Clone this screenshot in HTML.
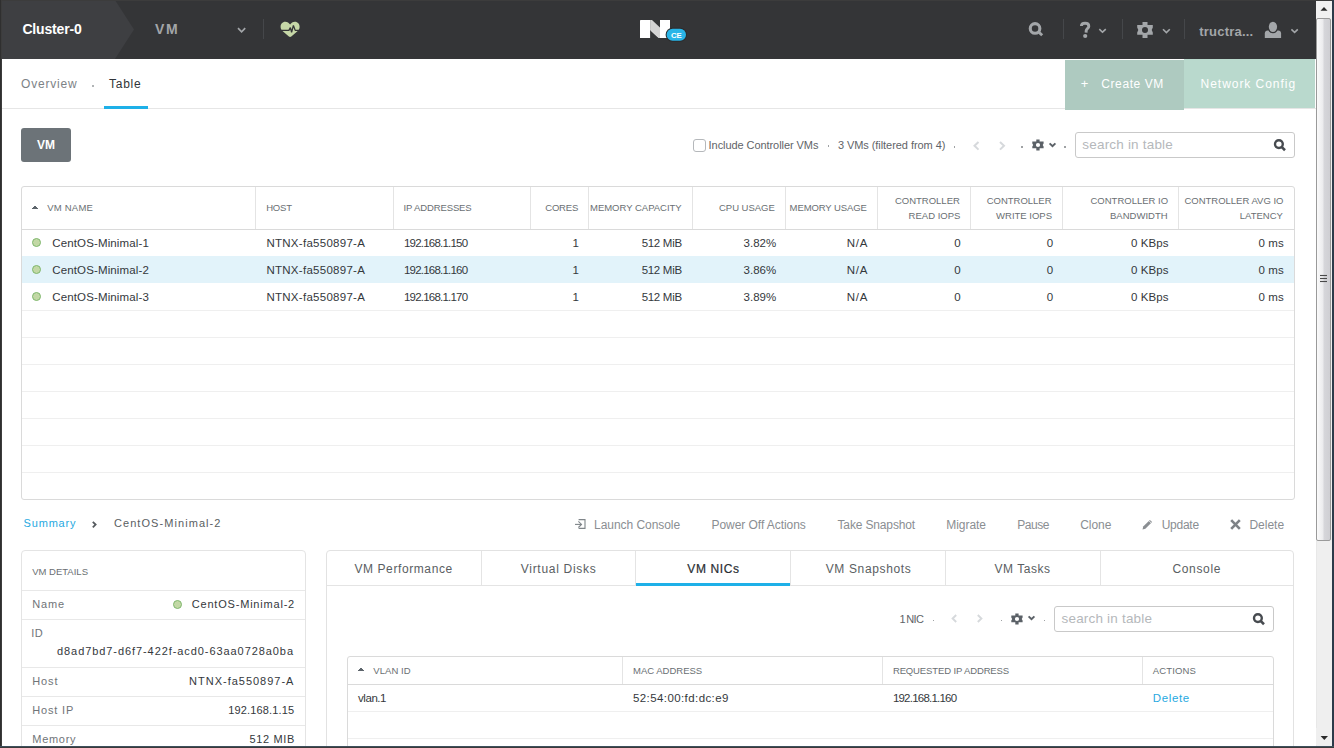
<!DOCTYPE html>
<html><head><meta charset="utf-8">
<style>
*{box-sizing:border-box;margin:0;padding:0}
html,body{width:1334px;height:748px;overflow:hidden;background:#fff;font-family:"Liberation Sans",sans-serif}
.a{position:absolute;white-space:nowrap}
.b{position:absolute}
#frame{position:absolute;left:0;top:0;width:1334px;height:748px;overflow:hidden;background:#fff}
.hl{position:absolute;height:1px;background:#efefef}
.vl{position:absolute;width:1px;background:#e4e4e4}
.dot{position:absolute;width:9px;height:9px;border-radius:50%;background:#c2d8a5;border:1px solid #7fb76d}
</style></head>
<body>
<div id="frame">
<!-- ===== HEADER ===== -->
<div class="b" style="left:0;top:0;width:1334px;height:59px;background:#343537"></div>
<svg class="b" style="left:0;top:0" width="140" height="59"><polygon points="0,0 115,0 134,29.5 115,59 0,59" fill="#3e3f42"/></svg>
<svg class="b" style="left:237px;top:27px" width="10" height="7"><polyline points="1,1.2 4.6,4.8 8.2,1.2" fill="none" stroke="#a3a6a9" stroke-width="1.7"/></svg>
<div class="b" style="left:263px;top:19px;width:1px;height:20px;background:#45474a"></div>
<!-- heart -->
<svg class="b" style="left:278px;top:19px" width="24" height="21" viewBox="278 19 24 21">
  <path d="M290.1 24.6 C291.2 22.8 292.8 21.7 294.9 21.7 C297.8 21.7 299.6 24 299.6 26.8 C299.6 28.6 299 29.7 298 30.8 L291.3 36.6 C290.6 37.2 289.6 37.2 288.9 36.6 L282.2 30.8 C281.2 29.7 280.6 28.6 280.6 26.8 C280.6 24 282.4 21.7 285.3 21.7 C287.4 21.7 289 22.8 290.1 24.6 Z" fill="#c6d7a7"/>
  <polyline points="280,30.4 288.9,30.4 290.4,27.6 291.6,32.4 293.4,25.4 295.2,30.4 300,30.4" fill="none" stroke="#343537" stroke-width="1.3" stroke-linejoin="bevel"/>
</svg>
<!-- logo -->
<svg class="b" style="left:638px;top:18px" width="52" height="26" viewBox="638 18 52 26">
  <polygon points="640.6,20 650.1,20 650.1,38 640,38 640,20.6" fill="#ffffff"/>
  <polygon points="660,20 670,20 670,38 660,38" fill="#ffffff"/>
  <polygon points="650.1,20 652,20 660,27.4 660,38 658.6,38 650.1,29.9" fill="#d3d3d3"/>
  <line x1="650.6" y1="30.3" x2="658.6" y2="37.6" stroke="#eaeaea" stroke-width="0.6"/>
  <rect x="665.6" y="27.8" width="21.4" height="14" rx="7" fill="#2b2b2d"/>
  <rect x="666.6" y="28.8" width="19.4" height="12" rx="6" fill="#29b5e8"/>
  <text x="676.4" y="37.9" font-family="Liberation Sans" font-weight="bold" font-size="7.8" fill="#fff" text-anchor="middle">CE</text>
</svg>
<!-- right icons -->
<svg class="b" style="left:1026px;top:19px" width="20" height="20" viewBox="1026 19 20 20">
  <circle cx="1035.05" cy="28.4" r="4.8" fill="none" stroke="#a3a6a9" stroke-width="3.1"/>
  <line x1="1038.6" y1="32" x2="1042.2" y2="35.3" stroke="#a3a6a9" stroke-width="2.9" stroke-linecap="butt"/>
</svg>
<div class="b" style="left:1063px;top:19px;width:1px;height:20px;background:#45474a"></div>
<svg class="b" style="left:1076px;top:19px" width="18" height="21" viewBox="1076 19 18 21">
  <path d="M1081.4 26.1 C1081.4 24 1083.1 23.3 1085.1 23.3 C1087.3 23.3 1088.8 24.4 1088.8 26.2 C1088.8 28.3 1086.4 28.7 1086.2 30.7 L1086.1 32.6" fill="none" stroke="#a3a6a9" stroke-width="2.9"/>
  <circle cx="1085.2" cy="36" r="2.1" fill="#a3a6a9"/>
</svg>
<svg class="b" style="left:1098px;top:28px" width="10" height="7"><polyline points="1.3,1.1 4.5,4.2 7.8,1.1" fill="none" stroke="#a3a6a9" stroke-width="1.6"/></svg>
<div class="b" style="left:1122px;top:19px;width:1px;height:20px;background:#45474a"></div>
<svg class="b" style="left:1134px;top:19px" width="22" height="22" viewBox="1134 19 22 22">
  <path fill="#a3a6a9" fill-rule="evenodd" d="M1137.2 24.9 L1142.5 24.9 L1142.5 21.9 L1147.5 21.9 L1147.5 24.9 L1152.8 24.9 L1152.8 27.6 L1151.7 30 L1152.8 32.4 L1152.8 34.7 L1147.5 34.7 L1147.5 37.9 L1142.5 37.9 L1142.5 34.7 L1137.2 34.7 L1137.2 32.4 L1138.3 30 L1137.2 27.6 Z M1148 30 A3 3 0 1 0 1142 30 A3 3 0 1 0 1148 30 Z"/>
</svg>
<svg class="b" style="left:1162px;top:28px" width="10" height="7"><polyline points="1,1.2 4.4,4.6 7.8,1.2" fill="none" stroke="#a3a6a9" stroke-width="1.6"/></svg>
<div class="b" style="left:1184px;top:19px;width:1px;height:20px;background:#45474a"></div>
<svg class="b" style="left:1262px;top:19px" width="22" height="21" viewBox="1262 19 22 21">
  <path d="M1264.8 37.9 L1264.8 33.6 C1264.8 31.9 1266 30.6 1267.6 30.6 L1278.3 30.6 C1279.9 30.6 1281.1 31.9 1281.1 33.6 L1281.1 37.9 Z" fill="#a3a6a9"/>
  <ellipse cx="1272.95" cy="26.85" rx="5.4" ry="6.4" fill="#343537"/>
  <ellipse cx="1272.95" cy="26.85" rx="4.15" ry="5.15" fill="#a3a6a9"/>
</svg>
<svg class="b" style="left:1290px;top:28px" width="10" height="7"><polyline points="1.4,1.4 4.6,4.4 7.8,1.4" fill="none" stroke="#a3a6a9" stroke-width="1.6"/></svg>

<!-- ===== SUBNAV ===== -->
<div class="b" style="left:0;top:108px;width:1316px;height:1px;background:#e6e6e6"></div>
<div class="b" style="left:104px;top:106px;width:44px;height:2.5px;background:#1eb0e8"></div>
<div class="b" style="left:1065px;top:60px;width:119px;height:50px;background:#aecac0"></div>
<div class="b" style="left:1184px;top:59px;width:131px;height:49px;background:#b9d9cd"></div>

<!-- ===== TOOLBAR ===== -->
<div class="b" style="left:21px;top:128px;width:50px;height:34px;background:#6c7378;border-radius:3px"></div>
<div class="b" style="left:693px;top:139px;width:13px;height:13px;border:1px solid #b5b8bb;border-radius:3px;background:#fff"></div>
<svg class="b" style="left:970px;top:140px" width="12" height="12"><polyline points="8.5,2 4.5,5.8 8.5,9.6" fill="none" stroke="#d6d9dc" stroke-width="2"/></svg>
<svg class="b" style="left:997px;top:140px" width="12" height="12"><polyline points="3,2 7,5.8 3,9.6" fill="none" stroke="#d6d9dc" stroke-width="2"/></svg>
<svg class="b" style="left:1030px;top:136.5px" width="16" height="16" viewBox="1030 136.5 16 16">
  <path fill="#5b6167" fill-rule="evenodd" d="M1032.30 141.00 L1036.30 141.00 L1036.30 139.00 L1039.60 139.00 L1039.60 141.00 L1043.60 141.00 L1043.60 143.10 L1042.70 144.50 L1043.60 145.90 L1043.60 147.80 L1039.60 147.80 L1039.60 150.00 L1036.30 150.00 L1036.30 147.80 L1032.30 147.80 L1032.30 145.90 L1033.20 144.50 L1032.30 143.10 Z M1040.10 144.50 A2.1 2.1 0 1 0 1035.90 144.50 A2.1 2.1 0 1 0 1040.10 144.50 Z"/>
</svg>
<svg class="b" style="left:1048px;top:142px" width="9" height="7"><polyline points="1.6,1.4 4.5,4.2 7.4,1.4" fill="none" stroke="#5b6167" stroke-width="2"/></svg>
<div class="b" style="left:1075px;top:132px;width:220px;height:26px;border:1px solid #c9c9c9;border-radius:3px;background:#fff"></div>
<svg class="b" style="left:1273px;top:138px" width="15" height="15" viewBox="0 0 15 15">
  <circle cx="5.9" cy="6.1" r="3.9" fill="none" stroke="#474b50" stroke-width="2.4"/>
  <line x1="8.6" y1="8.9" x2="12" y2="12.2" stroke="#474b50" stroke-width="2.6" stroke-linecap="butt"/>
</svg>

<!-- ===== MAIN TABLE ===== -->
<div class="b" style="left:21px;top:186px;width:1274px;height:314px;border:1px solid #dadada;border-radius:3px;background:#fff"></div>
<div class="b" style="left:22px;top:229px;width:1272px;height:1px;background:#dadada"></div>
<div class="b" style="left:22px;top:256px;width:1272px;height:27px;background:#e2f3fa"></div>
<div class="hl" style="left:22px;top:310px;width:1272px"></div>
<div class="hl" style="left:22px;top:337px;width:1272px"></div>
<div class="hl" style="left:22px;top:364px;width:1272px"></div>
<div class="hl" style="left:22px;top:391px;width:1272px"></div>
<div class="hl" style="left:22px;top:418px;width:1272px"></div>
<div class="hl" style="left:22px;top:445px;width:1272px"></div>
<div class="hl" style="left:22px;top:472px;width:1272px"></div>
<div class="vl" style="left:255px;top:187px;height:42px"></div>
<div class="vl" style="left:393px;top:187px;height:42px"></div>
<div class="vl" style="left:530px;top:187px;height:42px"></div>
<div class="vl" style="left:588px;top:187px;height:42px"></div>
<div class="vl" style="left:692px;top:187px;height:42px"></div>
<div class="vl" style="left:785px;top:187px;height:42px"></div>
<div class="vl" style="left:877px;top:187px;height:42px"></div>
<div class="vl" style="left:970px;top:187px;height:42px"></div>
<div class="vl" style="left:1062px;top:187px;height:42px"></div>
<div class="vl" style="left:1178px;top:187px;height:42px"></div>
<div class="b" style="left:34px;top:206px;width:2px;height:1px;background:#5d656c"></div><div class="b" style="left:33px;top:207px;width:4px;height:1px;background:#5d656c"></div><div class="b" style="left:32px;top:208px;width:6px;height:1px;background:#5d656c"></div>
<div class="dot" style="left:32px;top:238px"></div>
<div class="dot" style="left:32px;top:265px"></div>
<div class="dot" style="left:32px;top:292px"></div>

<!-- ===== BREADCRUMB / ACTIONS ===== -->
<svg class="b" style="left:88px;top:518px" width="12" height="12" viewBox="88 518 12 12"><polyline points="92.8,521.9 95.6,524.6 92.8,527.3" fill="none" stroke="#555a5e" stroke-width="1.8"/></svg>
<svg class="b" style="left:572px;top:516px" width="16" height="16" viewBox="572 516 16 16">
  <polyline points="578.6,519.6 585,519.6 585,528.4 578.6,528.4" fill="none" stroke="#7f8589" stroke-width="1.1"/>
  <line x1="575" y1="524.4" x2="581.4" y2="524.4" stroke="#7f8589" stroke-width="1.1"/>
  <polyline points="578.4,521.3 581.5,524.4 578.4,527.5" fill="none" stroke="#7f8589" stroke-width="1.1"/>
</svg>
<svg class="b" style="left:1141px;top:518px" width="13" height="13" viewBox="0 0 13 13">
  <polygon points="1.5,11.5 2.2,8.6 8.9,1.9 11.1,4.1 4.4,10.8" fill="#8a8e92"/>
  <line x1="8" y1="2.8" x2="10.2" y2="5" stroke="#fff" stroke-width="0.8"/>
</svg>
<svg class="b" style="left:1229px;top:518px" width="13" height="13" viewBox="0 0 13 13">
  <line x1="2.2" y1="2.2" x2="10.8" y2="10.8" stroke="#7d8286" stroke-width="2.6"/>
  <line x1="10.8" y1="2.2" x2="2.2" y2="10.8" stroke="#7d8286" stroke-width="2.6"/>
</svg>

<!-- ===== VM DETAILS ===== -->
<div class="b" style="left:21px;top:550px;width:285px;height:220px;border:1px solid #e4e4e4;border-radius:4px;background:#fff"></div>
<div class="hl" style="left:22px;top:590px;width:283px;background:#e8e8e8"></div>
<div class="hl" style="left:22px;top:619px;width:283px;background:#e8e8e8"></div>
<div class="hl" style="left:22px;top:667px;width:283px;background:#e8e8e8"></div>
<div class="hl" style="left:22px;top:696px;width:283px;background:#e8e8e8"></div>
<div class="hl" style="left:22px;top:725px;width:283px;background:#e8e8e8"></div>
<div class="dot" style="left:173px;top:600px"></div>

<!-- ===== TABS PANEL ===== -->
<div class="b" style="left:326px;top:550px;width:968px;height:220px;border:1px solid #e2e2e2;border-radius:4px;background:#fff"></div>
<div class="hl" style="left:327px;top:585px;width:966px;background:#e4e4e4"></div>
<div class="vl" style="left:481px;top:551px;height:34px"></div>
<div class="vl" style="left:635px;top:551px;height:34px"></div>
<div class="vl" style="left:790px;top:551px;height:34px"></div>
<div class="vl" style="left:945px;top:551px;height:34px"></div>
<div class="vl" style="left:1100px;top:551px;height:34px"></div>
<div class="b" style="left:636px;top:583px;width:154px;height:3px;background:#1eb0e8"></div>
<!-- inner toolbar -->
<svg class="b" style="left:949px;top:613px" width="10" height="12"><polyline points="7.2,2 3.6,5.5 7.2,9" fill="none" stroke="#d6d9dc" stroke-width="1.9"/></svg>
<svg class="b" style="left:975px;top:613px" width="10" height="12"><polyline points="2.8,2 6.4,5.5 2.8,9" fill="none" stroke="#d6d9dc" stroke-width="1.9"/></svg>
<svg class="b" style="left:1009px;top:610.8px" width="16" height="16" viewBox="1009 610.8 16 16">
  <path fill="#5b6167" fill-rule="evenodd" d="M1011.30 615.30 L1015.30 615.30 L1015.30 613.30 L1018.60 613.30 L1018.60 615.30 L1022.60 615.30 L1022.60 617.40 L1021.70 618.80 L1022.60 620.20 L1022.60 622.10 L1018.60 622.10 L1018.60 624.30 L1015.30 624.30 L1015.30 622.10 L1011.30 622.10 L1011.30 620.20 L1012.20 618.80 L1011.30 617.40 Z M1019.10 618.80 A2.1 2.1 0 1 0 1014.90 618.80 A2.1 2.1 0 1 0 1019.10 618.80 Z"/>
</svg>
<svg class="b" style="left:1027px;top:615px" width="9" height="7"><polyline points="1.6,1.4 4.5,4.2 7.4,1.4" fill="none" stroke="#5b6167" stroke-width="2"/></svg>
<div class="b" style="left:1054px;top:606px;width:220px;height:26px;border:1px solid #c9c9c9;border-radius:3px;background:#fff"></div>
<svg class="b" style="left:1252px;top:612px" width="15" height="15" viewBox="0 0 15 15">
  <circle cx="5.9" cy="6.1" r="3.9" fill="none" stroke="#474b50" stroke-width="2.4"/>
  <line x1="8.6" y1="8.9" x2="12" y2="12.2" stroke="#474b50" stroke-width="2.6" stroke-linecap="butt"/>
</svg>
<!-- NIC table -->
<div class="b" style="left:347px;top:656px;width:927px;height:120px;border:1px solid #dadada;border-radius:3px;background:#fff"></div>
<div class="b" style="left:348px;top:684px;width:925px;height:1px;background:#dadada"></div>
<div class="hl" style="left:348px;top:711px;width:925px"></div>
<div class="hl" style="left:348px;top:738px;width:925px"></div>
<div class="vl" style="left:622px;top:657px;height:27px"></div>
<div class="vl" style="left:882px;top:657px;height:27px"></div>
<div class="vl" style="left:1142px;top:657px;height:27px"></div>
<div class="b" style="left:360px;top:668px;width:2px;height:1px;background:#5d656c"></div><div class="b" style="left:359px;top:669px;width:4px;height:1px;background:#5d656c"></div><div class="b" style="left:358px;top:670px;width:6px;height:1px;background:#5d656c"></div>

<div class="a" style="top:20.65px;font-size:14px;line-height:17px;color:#ffffff;font-weight:bold;letter-spacing:-0.162px;left:22.40px;">Cluster-0</div>
<div class="a" style="top:20.65px;font-size:14px;line-height:17px;color:#a3a6a9;font-weight:bold;letter-spacing:1.662px;left:155.00px;">VM</div>
<div class="a" style="top:23.90px;font-size:13px;line-height:16px;color:#a3a6a9;font-weight:bold;letter-spacing:0.211px;left:1199.30px;">tructra...</div>
<div class="a" style="top:77.34px;font-size:12px;line-height:14px;color:#7d8286;letter-spacing:0.808px;left:21.00px;">Overview</div>
<div class="a" style="top:77.34px;font-size:12px;line-height:14px;color:#303438;letter-spacing:0.747px;left:109.00px;">Table</div>
<div class="a" style="top:75.90px;font-size:13px;line-height:16px;color:#ffffff;left:1080.80px;">+</div>
<div class="a" style="top:77.24px;font-size:12px;line-height:14px;color:#ffffff;letter-spacing:0.581px;left:1101.30px;">Create VM</div>
<div class="a" style="top:77.24px;font-size:12px;line-height:14px;color:#ffffff;letter-spacing:0.957px;left:1200.60px;">Network Config</div>
<div class="a" style="top:137.74px;font-size:12px;line-height:14px;color:#ffffff;font-weight:bold;letter-spacing:0.096px;left:37.00px;">VM</div>
<div class="a" style="top:138.59px;font-size:11px;line-height:13px;color:#5f6468;letter-spacing:-0.070px;left:708.60px;">Include Controller VMs</div>
<div class="a" style="top:139.39px;font-size:11px;line-height:13px;color:#5f6468;letter-spacing:-0.061px;left:837.90px;">3 VMs (filtered from 4)</div>
<div class="a" style="top:137.32px;font-size:13.5px;line-height:16px;color:#b5b8bb;letter-spacing:0.193px;left:1082.30px;">search in table</div>
<div class="a" style="top:202.41px;font-size:9.5px;line-height:11px;color:#6a6f73;letter-spacing:0.233px;left:47.20px;">VM NAME</div>
<div class="a" style="top:202.41px;font-size:9.5px;line-height:11px;color:#6a6f73;letter-spacing:-0.195px;left:266.20px;">HOST</div>
<div class="a" style="top:202.41px;font-size:9.5px;line-height:11px;color:#6a6f73;letter-spacing:-0.125px;left:403.50px;">IP ADDRESSES</div>
<div class="a" style="top:202.41px;font-size:9.5px;line-height:11px;color:#6a6f73;letter-spacing:-0.162px;left:545.20px;">CORES</div>
<div class="a" style="top:202.41px;font-size:9.5px;line-height:11px;color:#6a6f73;letter-spacing:-0.013px;left:590.00px;">MEMORY CAPACITY</div>
<div class="a" style="top:202.41px;font-size:9.5px;line-height:11px;color:#6a6f73;letter-spacing:-0.027px;left:719.00px;">CPU USAGE</div>
<div class="a" style="top:202.41px;font-size:9.5px;line-height:11px;color:#6a6f73;letter-spacing:-0.104px;left:789.60px;">MEMORY USAGE</div>
<div class="a" style="top:195.31px;font-size:9.5px;line-height:11px;color:#6a6f73;left:894.93px;">CONTROLLER</div>
<div class="a" style="top:210.21px;font-size:9.5px;line-height:11px;color:#6a6f73;left:908.60px;">READ IOPS</div>
<div class="a" style="top:195.31px;font-size:9.5px;line-height:11px;color:#6a6f73;left:986.63px;">CONTROLLER</div>
<div class="a" style="top:210.21px;font-size:9.5px;line-height:11px;color:#6a6f73;left:996.09px;">WRITE IOPS</div>
<div class="a" style="top:195.31px;font-size:9.5px;line-height:11px;color:#6a6f73;left:1090.49px;">CONTROLLER IO</div>
<div class="a" style="top:210.21px;font-size:9.5px;line-height:11px;color:#6a6f73;left:1110.04px;">BANDWIDTH</div>
<div class="a" style="top:195.31px;font-size:9.5px;line-height:11px;color:#6a6f73;left:1184.40px;">CONTROLLER AVG IO</div>
<div class="a" style="top:210.21px;font-size:9.5px;line-height:11px;color:#6a6f73;left:1239.82px;">LATENCY</div>
<div class="a" style="top:236.02px;font-size:11.5px;line-height:14px;color:#34383c;letter-spacing:0.141px;left:52.20px;">CentOS-Minimal-1</div>
<div class="a" style="top:236.02px;font-size:11.5px;line-height:14px;color:#34383c;letter-spacing:0.276px;left:266.40px;">NTNX-fa550897-A</div>
<div class="a" style="top:236.02px;font-size:11.5px;line-height:14px;color:#34383c;letter-spacing:-0.787px;left:404.00px;">192.168.1.150</div>
<div class="a" style="top:236.02px;font-size:11.5px;line-height:14px;color:#34383c;left:572.60px;">1</div>
<div class="a" style="top:236.02px;font-size:11.5px;line-height:14px;color:#34383c;letter-spacing:-0.303px;left:641.70px;">512 MiB</div>
<div class="a" style="top:236.02px;font-size:11.5px;line-height:14px;color:#34383c;left:743.60px;">3.82%</div>
<div class="a" style="top:236.02px;font-size:11.5px;line-height:14px;color:#34383c;letter-spacing:0.700px;left:846.80px;">N/A</div>
<div class="a" style="top:236.02px;font-size:11.5px;line-height:14px;color:#34383c;left:954.20px;">0</div>
<div class="a" style="top:236.02px;font-size:11.5px;line-height:14px;color:#34383c;left:1046.80px;">0</div>
<div class="a" style="top:236.02px;font-size:11.5px;line-height:14px;color:#34383c;letter-spacing:0.095px;left:1131.00px;">0 KBps</div>
<div class="a" style="top:236.02px;font-size:11.5px;line-height:14px;color:#34383c;letter-spacing:0.143px;left:1258.40px;">0 ms</div>
<div class="a" style="top:263.02px;font-size:11.5px;line-height:14px;color:#34383c;letter-spacing:0.141px;left:52.20px;">CentOS-Minimal-2</div>
<div class="a" style="top:263.02px;font-size:11.5px;line-height:14px;color:#34383c;letter-spacing:0.276px;left:266.40px;">NTNX-fa550897-A</div>
<div class="a" style="top:263.02px;font-size:11.5px;line-height:14px;color:#34383c;letter-spacing:-0.787px;left:404.00px;">192.168.1.160</div>
<div class="a" style="top:263.02px;font-size:11.5px;line-height:14px;color:#34383c;left:572.60px;">1</div>
<div class="a" style="top:263.02px;font-size:11.5px;line-height:14px;color:#34383c;letter-spacing:-0.303px;left:641.70px;">512 MiB</div>
<div class="a" style="top:263.02px;font-size:11.5px;line-height:14px;color:#34383c;left:743.60px;">3.86%</div>
<div class="a" style="top:263.02px;font-size:11.5px;line-height:14px;color:#34383c;letter-spacing:0.700px;left:846.80px;">N/A</div>
<div class="a" style="top:263.02px;font-size:11.5px;line-height:14px;color:#34383c;left:954.20px;">0</div>
<div class="a" style="top:263.02px;font-size:11.5px;line-height:14px;color:#34383c;left:1046.80px;">0</div>
<div class="a" style="top:263.02px;font-size:11.5px;line-height:14px;color:#34383c;letter-spacing:0.095px;left:1131.00px;">0 KBps</div>
<div class="a" style="top:263.02px;font-size:11.5px;line-height:14px;color:#34383c;letter-spacing:0.143px;left:1258.40px;">0 ms</div>
<div class="a" style="top:290.02px;font-size:11.5px;line-height:14px;color:#34383c;letter-spacing:0.141px;left:52.20px;">CentOS-Minimal-3</div>
<div class="a" style="top:290.02px;font-size:11.5px;line-height:14px;color:#34383c;letter-spacing:0.276px;left:266.40px;">NTNX-fa550897-A</div>
<div class="a" style="top:290.02px;font-size:11.5px;line-height:14px;color:#34383c;letter-spacing:-0.787px;left:404.00px;">192.168.1.170</div>
<div class="a" style="top:290.02px;font-size:11.5px;line-height:14px;color:#34383c;left:572.60px;">1</div>
<div class="a" style="top:290.02px;font-size:11.5px;line-height:14px;color:#34383c;letter-spacing:-0.303px;left:641.70px;">512 MiB</div>
<div class="a" style="top:290.02px;font-size:11.5px;line-height:14px;color:#34383c;left:743.60px;">3.89%</div>
<div class="a" style="top:290.02px;font-size:11.5px;line-height:14px;color:#34383c;letter-spacing:0.700px;left:846.80px;">N/A</div>
<div class="a" style="top:290.02px;font-size:11.5px;line-height:14px;color:#34383c;left:954.20px;">0</div>
<div class="a" style="top:290.02px;font-size:11.5px;line-height:14px;color:#34383c;left:1046.80px;">0</div>
<div class="a" style="top:290.02px;font-size:11.5px;line-height:14px;color:#34383c;letter-spacing:0.095px;left:1131.00px;">0 KBps</div>
<div class="a" style="top:290.02px;font-size:11.5px;line-height:14px;color:#34383c;letter-spacing:0.143px;left:1258.40px;">0 ms</div>
<div class="a" style="top:517.49px;font-size:11px;line-height:13px;color:#27a9e1;letter-spacing:0.806px;left:23.60px;">Summary</div>
<div class="a" style="top:517.49px;font-size:11px;line-height:13px;color:#5a5e62;letter-spacing:1.063px;left:114.00px;">CentOS-Minimal-2</div>
<div class="a" style="top:518.24px;font-size:12px;line-height:14px;color:#8a8e92;letter-spacing:-0.051px;left:594.10px;">Launch Console</div>
<div class="a" style="top:518.24px;font-size:12px;line-height:14px;color:#8a8e92;letter-spacing:-0.051px;left:711.50px;">Power Off Actions</div>
<div class="a" style="top:518.24px;font-size:12px;line-height:14px;color:#8a8e92;letter-spacing:-0.146px;left:837.50px;">Take Snapshot</div>
<div class="a" style="top:518.24px;font-size:12px;line-height:14px;color:#8a8e92;letter-spacing:-0.057px;left:946.30px;">Migrate</div>
<div class="a" style="top:518.24px;font-size:12px;line-height:14px;color:#8a8e92;letter-spacing:-0.488px;left:1017.30px;">Pause</div>
<div class="a" style="top:518.24px;font-size:12px;line-height:14px;color:#8a8e92;letter-spacing:-0.045px;left:1080.20px;">Clone</div>
<div class="a" style="top:518.24px;font-size:12px;line-height:14px;color:#8a8e92;letter-spacing:-0.264px;left:1161.70px;">Update</div>
<div class="a" style="top:518.24px;font-size:12px;line-height:14px;color:#8a8e92;left:1249.40px;">Delete</div>
<div class="a" style="top:565.61px;font-size:9.5px;line-height:11px;color:#6a6f73;left:32.20px;">VM DETAILS</div>
<div class="a" style="top:597.69px;font-size:11px;line-height:13px;color:#6f7478;letter-spacing:0.858px;left:32.20px;">Name</div>
<div class="a" style="top:597.69px;font-size:11px;line-height:13px;color:#34383c;letter-spacing:0.797px;left:191.80px;">CentOS-Minimal-2</div>
<div class="a" style="top:626.69px;font-size:11px;line-height:13px;color:#6f7478;letter-spacing:0.600px;left:31.20px;">ID</div>
<div class="a" style="top:645.49px;font-size:11px;line-height:13px;color:#34383c;letter-spacing:0.924px;left:57.00px;">d8ad7bd7-d6f7-422f-acd0-63aa0728a0ba</div>
<div class="a" style="top:674.79px;font-size:11px;line-height:13px;color:#6f7478;letter-spacing:0.879px;left:32.30px;">Host</div>
<div class="a" style="top:674.79px;font-size:11px;line-height:13px;color:#34383c;letter-spacing:0.989px;left:189.10px;">NTNX-fa550897-A</div>
<div class="a" style="top:703.79px;font-size:11px;line-height:13px;color:#6f7478;letter-spacing:0.812px;left:32.30px;">Host IP</div>
<div class="a" style="top:703.79px;font-size:11px;line-height:13px;color:#34383c;letter-spacing:0.154px;left:228.20px;">192.168.1.15</div>
<div class="a" style="top:733.19px;font-size:11px;line-height:13px;color:#6f7478;letter-spacing:0.695px;left:32.30px;">Memory</div>
<div class="a" style="top:733.19px;font-size:11px;line-height:13px;color:#34383c;letter-spacing:0.629px;left:249.60px;">512 MIB</div>
<div class="a" style="top:561.84px;font-size:12px;line-height:14px;color:#5a5e62;letter-spacing:0.596px;left:354.40px;">VM Performance</div>
<div class="a" style="top:561.84px;font-size:12px;line-height:14px;color:#5a5e62;letter-spacing:0.703px;left:520.80px;">Virtual Disks</div>
<div class="a" style="top:561.84px;font-size:12px;line-height:14px;color:#2a2e32;letter-spacing:0.633px;left:687.30px;-webkit-text-stroke:0.2px #2a2e32;">VM NICs</div>
<div class="a" style="top:561.84px;font-size:12px;line-height:14px;color:#5a5e62;letter-spacing:0.642px;left:825.70px;">VM Snapshots</div>
<div class="a" style="top:561.84px;font-size:12px;line-height:14px;color:#5a5e62;letter-spacing:0.499px;left:994.60px;">VM Tasks</div>
<div class="a" style="top:561.84px;font-size:12px;line-height:14px;color:#5a5e62;letter-spacing:0.641px;left:1172.50px;">Console</div>
<div class="a" style="top:613.09px;font-size:11px;line-height:13px;color:#5f6468;left:899.50px;">1</div>
<div class="a" style="top:613.09px;font-size:11px;line-height:13px;color:#5f6468;letter-spacing:-0.700px;left:906.30px;">NIC</div>
<div class="a" style="top:611.42px;font-size:13.5px;line-height:16px;color:#b5b8bb;letter-spacing:0.193px;left:1061.50px;">search in table</div>
<div class="a" style="top:665.01px;font-size:9.5px;line-height:11px;color:#6a6f73;letter-spacing:0.067px;left:373.30px;">VLAN ID</div>
<div class="a" style="top:665.01px;font-size:9.5px;line-height:11px;color:#6a6f73;left:633.00px;">MAC ADDRESS</div>
<div class="a" style="top:665.01px;font-size:9.5px;line-height:11px;color:#6a6f73;letter-spacing:-0.125px;left:892.90px;">REQUESTED IP ADDRESS</div>
<div class="a" style="top:665.01px;font-size:9.5px;line-height:11px;color:#6a6f73;letter-spacing:0.152px;left:1152.80px;">ACTIONS</div>
<div class="a" style="top:690.72px;font-size:11.5px;line-height:14px;color:#34383c;letter-spacing:-0.438px;left:358.00px;">vlan.1</div>
<div class="a" style="top:690.72px;font-size:11.5px;line-height:14px;color:#34383c;letter-spacing:0.407px;left:633.00px;">52:54:00:fd:dc:e9</div>
<div class="a" style="top:690.72px;font-size:11.5px;line-height:14px;color:#34383c;letter-spacing:-0.779px;left:892.90px;">192.168.1.160</div>
<div class="a" style="top:690.72px;font-size:11.5px;line-height:14px;color:#27a9e1;letter-spacing:0.631px;left:1152.80px;">Delete</div>
<div class="a" style="left:92.25px;top:85.00px;width:1.5px;height:1.5px;background:#7d8286;opacity:.6"></div>
<div class="a" style="left:827.55px;top:145.40px;width:1.5px;height:1.5px;background:#5f6468;opacity:.6"></div>
<div class="a" style="left:953.85px;top:146.20px;width:1.5px;height:1.5px;background:#5f6468;opacity:.6"></div>
<div class="a" style="left:1021.25px;top:146.20px;width:1.5px;height:1.5px;background:#5f6468;opacity:.6"></div>
<div class="a" style="left:1064.45px;top:146.20px;width:1.5px;height:1.5px;background:#5f6468;opacity:.6"></div>
<div class="a" style="left:932.75px;top:619.90px;width:1.5px;height:1.5px;background:#5f6468;opacity:.6"></div>
<div class="a" style="left:1000.75px;top:619.90px;width:1.5px;height:1.5px;background:#5f6468;opacity:.6"></div>
<div class="a" style="left:1043.65px;top:619.90px;width:1.5px;height:1.5px;background:#5f6468;opacity:.6"></div>

<!-- ===== SCROLLBAR & FRAME ===== -->
<div class="b" style="left:1316px;top:0;width:16px;height:748px;background:#efefef;border-left:1px solid #e8e8e8"></div>
<div class="b" style="left:1316px;top:1px;width:16px;height:17px;background:#f1f1f1"></div>
<svg class="b" style="left:1316px;top:1px" width="16" height="17"><polygon points="4.5,9.8 8,6 11.5,9.8" fill="#2b2b2b"/></svg>
<div class="b" style="left:1316px;top:18px;width:15px;height:523px;border:1px solid #9a9a9a;border-radius:2px;background:linear-gradient(to right,#fafafa 0%,#ececee 45%,#d6d6da 55%,#cfcfd3 100%)"></div>
<svg class="b" style="left:1318px;top:273px" width="11" height="11"><g stroke="#4a4a4a" stroke-width="1.1"><line x1="2" y1="2.5" x2="9" y2="2.5"/><line x1="2" y1="5.5" x2="9" y2="5.5"/><line x1="2" y1="8.5" x2="9" y2="8.5"/></g></svg>
<div class="b" style="left:1316px;top:728px;width:16px;height:17px;background:#efefef"></div>
<svg class="b" style="left:1316px;top:728px" width="16" height="17"><polygon points="4.6,8 12,8 8.3,12" fill="#2b2b2b"/></svg>
<div class="b" style="left:0;top:0;width:1334px;height:1px;background:#3c3c3c"></div>
<div class="b" style="left:0;top:0;width:1px;height:748px;background:#2f2f2f"></div><div class="b" style="left:1px;top:0;width:1px;height:748px;background:#3c3c3c"></div>
<div class="b" style="left:1332px;top:0;width:2px;height:748px;background:#2c3b4a"></div>
<div class="b" style="left:0;top:746px;width:1334px;height:1px;background:#3f505c"></div><div class="b" style="left:0;top:747px;width:1334px;height:1px;background:#3a3a3a"></div>
</div>
</body></html>
